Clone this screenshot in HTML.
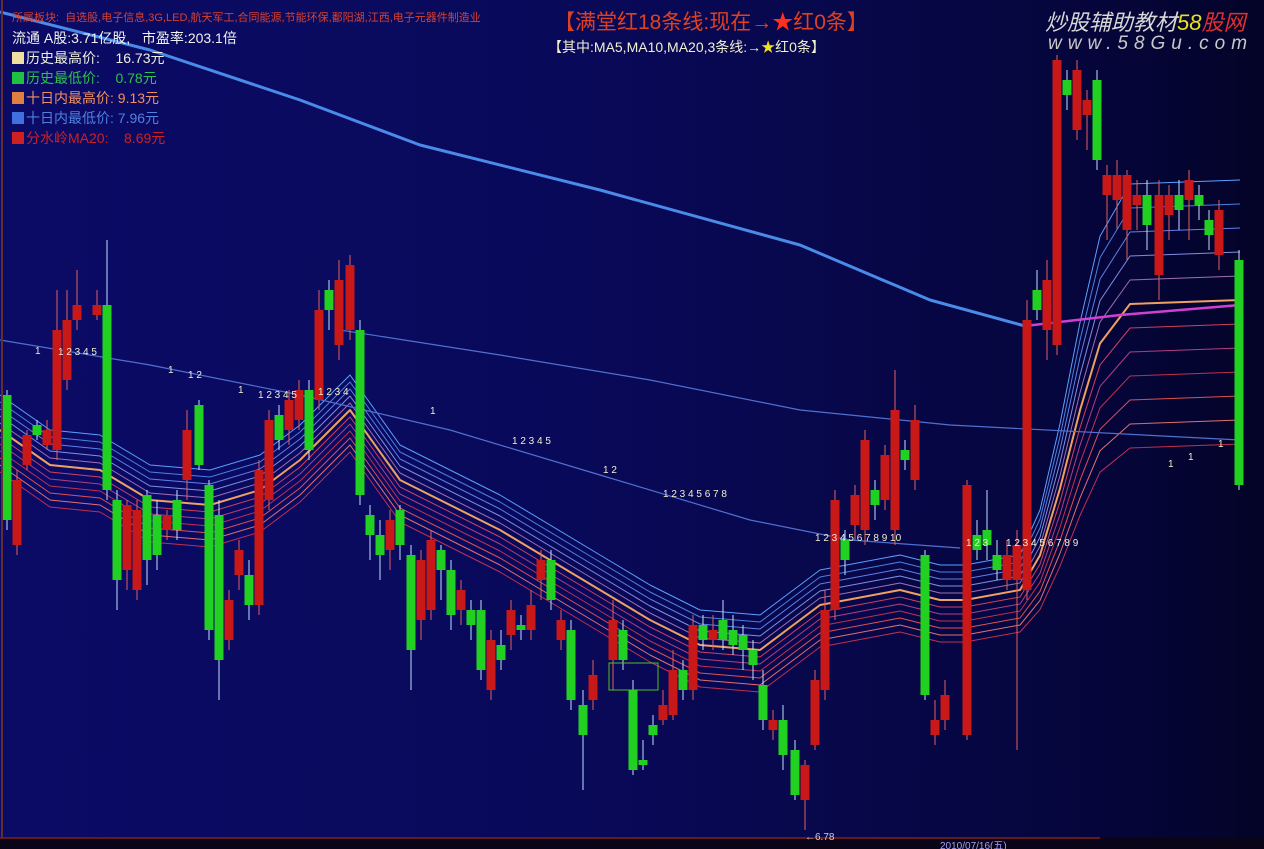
<!DOCTYPE html>
<html><head><meta charset="utf-8"><style>
html,body{margin:0;padding:0;}
body{width:1264px;height:849px;overflow:hidden;position:relative;background:linear-gradient(90deg,#0b0b66 0%,#09095a 45%,#070748 70%,#05053a 88%,#040428 100%);font-family:"Liberation Sans","Noto Sans CJK SC",sans-serif;}
svg{position:absolute;left:0;top:0}
.t{position:absolute;white-space:nowrap}
.sq{display:inline-block;width:12px;height:12px;margin-right:2px;vertical-align:-1px}
</style></head><body>
<svg id="s" width="1264" height="849"></svg>
<div class="t" style="left:12px;top:9px;font-size:11px;color:#d84030">所属板块:&nbsp; 自选股,电子信息,3G,LED,航天军工,合同能源,节能环保,鄱阳湖,江西,电子元器件制造业</div>
<div class="t" style="left:12px;top:28px;font-size:14px;color:#f0f0f0">流通 A股:3.71亿股,&nbsp;&nbsp; 市盈率:203.1倍</div>
<div class="t" style="left:12px;top:48px;font-size:14px;color:#f0f0e0"><span class="sq" style="background:#f0e0a0"></span>历史最高价:&nbsp;&nbsp;&nbsp; 16.73元</div>
<div class="t" style="left:12px;top:68px;font-size:14px;color:#30c050"><span class="sq" style="background:#20c040"></span>历史最低价:&nbsp;&nbsp;&nbsp; 0.78元</div>
<div class="t" style="left:12px;top:88px;font-size:14px;color:#f09060"><span class="sq" style="background:#e08040"></span>十日内最高价: 9.13元</div>
<div class="t" style="left:12px;top:108px;font-size:14px;color:#5080e0"><span class="sq" style="background:#4070e0"></span>十日内最低价: 7.96元</div>
<div class="t" style="left:12px;top:128px;font-size:14px;color:#d02020"><span class="sq" style="background:#d02020"></span>分水岭MA20:&nbsp;&nbsp;&nbsp; 8.69元</div>
<div class="t" style="left:554px;top:6px;font-size:21px;color:#e04020">【满堂红18条线:现在→<span style="color:#ff3020">★</span>红0条】</div>
<div class="t" style="left:548px;top:37px;font-size:14px;color:#f0f0d0">【其中:MA5,MA10,MA20,3条线:→<span style="color:#f0e020">★</span>红0条】</div>
<div class="t" style="left:1045px;top:5px;font-size:22px;font-style:italic;color:#d8d8d8">炒股辅助教材<span style="color:#e8e020">58</span><span style="color:#e03030">股网</span></div>
<div class="t" style="left:1048px;top:33px;font-size:19px;font-style:italic;color:#c8c8c8;letter-spacing:6px">www.58Gu.com</div>
<script>
var s=document.getElementById('s'),h='';
function L(pts,c,w){h+='<polyline fill="none" stroke="'+c+'" stroke-width="'+w+'" stroke-linejoin="round" points="'+pts.map(p=>p.join(',')).join(' ')+'"/>';}
// ribbon
var c=[[0,430],[50,465],[100,470],[150,500],[210,505],[260,490],[300,460],[350,410],[400,480],[500,530],[600,590],[650,620],[700,645],[760,650],[820,605],[900,590],[940,600],[965,600],[1020,590]];
var cols=['#5aa0ff','#4a80e0','#6080e8','#8090e0','#a070b0','#f0a060','#d04060','#b04080','#c03050','#e05050','#e07070','#c03050'];
for(var k=0;k<12;k++){var o=(k-5)*7;var p=c.map(q=>[q[0],q[1]+o]);
var e=180+k*24, y0=590+o;
p.push([1040,y0-(y0-e)*0.12],[1060,y0-(y0-e)*0.35],[1080,y0-(y0-e)*0.62],[1100,y0-(y0-e)*0.85],[1130,e+4],[1240,e]);
L(p,cols[k],k==5?2:1);}
// long MA
L([[0,12],[150,50],[300,100],[420,145],[600,190],[800,245],[930,300],[1025,326]],'#4a8ae8',3);
L([[1025,326],[1120,315],[1240,305]],'#d040d0',2.5);
L([[0,340],[150,365],[300,395],[450,430],[600,475],[750,520],[850,540],[960,548]],'#5070d0',1.2);
L([[340,330],[500,355],[650,380],[800,410],[950,425],[1240,440]],'#5070d0',1.2);
var C=[[7,395,520,'g',390,530],[17,480,545,'r',470,555],[27,435,465,'r',430,470],[37,425,435,'g',420,440],[47,430,445,'r',420,450],[57,330,450,'r',290,460],[67,320,380,'r',290,390],[77,305,320,'r',270,330],[97,305,315,'r',290,320],[107,305,490,'g',240,500],[117,500,580,'g',490,610],[127,505,570,'r',500,590],[137,510,590,'r',500,600],[147,495,560,'g',490,585],[157,515,555,'g',500,570],[167,515,530,'r',510,540],[177,500,530,'g',490,540],[187,430,480,'r',410,500],[199,405,465,'g',400,470],[209,485,630,'g',480,640],[219,515,660,'g',500,700],[229,600,640,'r',590,650],[239,550,575,'r',540,590],[249,575,605,'g',560,620],[259,470,605,'r',460,615],[269,420,500,'r',410,510],[279,415,440,'g',405,450],[289,400,430,'r',390,445],[299,390,420,'r',380,430],[309,390,450,'g',380,460],[319,310,400,'r',290,410],[329,290,310,'g',280,330],[339,280,345,'r',260,360],[350,265,330,'r',255,340],[360,330,495,'g',320,505],[370,515,535,'g',505,560],[380,535,555,'g',520,580],[390,520,550,'r',510,570],[400,510,545,'g',505,560],[411,555,650,'g',545,690],[421,560,620,'r',550,640],[431,540,610,'r',530,620],[441,550,570,'g',545,600],[451,570,615,'g',560,630],[461,590,610,'r',580,625],[471,610,625,'g',600,640],[481,610,670,'g',600,680],[491,640,690,'r',630,700],[501,645,660,'g',630,670],[511,610,635,'r',600,650],[521,625,630,'g',615,640],[531,605,630,'r',590,640],[541,560,580,'r',550,600],[551,560,600,'g',550,610],[561,620,640,'r',610,650],[571,630,700,'g',620,710],[583,705,735,'g',690,790],[593,675,700,'r',660,710],[613,620,660,'r',600,690],[623,630,660,'g',620,670],[633,690,770,'g',680,775],[643,760,765,'g',740,770],[653,725,735,'g',715,745],[663,705,720,'r',690,725],[673,670,715,'r',650,720],[683,670,690,'g',660,700],[693,625,690,'r',615,700],[703,625,640,'g',615,650],[713,630,640,'r',615,650],[723,620,640,'g',600,650],[733,630,645,'g',615,655],[743,635,650,'g',625,670],[753,650,665,'g',640,680],[763,685,720,'g',670,730],[773,720,730,'r',710,740],[783,720,755,'g',705,770],[795,750,795,'g',740,800],[805,765,800,'r',760,830],[815,680,745,'r',670,750],[825,610,690,'r',590,700],[835,500,610,'r',490,620],[845,540,560,'g',530,575],[855,495,525,'r',485,540],[865,440,530,'r',430,545],[875,490,505,'g',480,520],[885,455,500,'r',445,510],[895,410,530,'r',370,545],[905,450,460,'g',440,470],[915,420,480,'r',405,490],[925,555,695,'g',550,700],[935,720,735,'r',700,745],[945,695,720,'r',680,730],[967,485,735,'r',480,740],[977,535,550,'g',520,560],[987,530,545,'g',490,560],[997,555,570,'g',540,580],[1007,555,580,'r',540,590],[1017,545,580,'r',530,750],[1027,320,590,'r',300,600],[1037,290,310,'g',270,320],[1047,280,330,'r',260,360],[1057,60,345,'r',55,355],[1067,80,95,'g',70,110],[1077,70,130,'r',60,140],[1087,100,115,'r',90,150],[1097,80,160,'g',70,170],[1107,175,195,'r',165,240],[1117,175,200,'r',160,230],[1127,175,230,'r',170,260],[1137,195,205,'r',180,230],[1147,195,225,'g',180,250],[1159,195,275,'r',180,300],[1169,195,215,'r',185,240],[1179,195,210,'g',180,230],[1189,180,200,'r',170,240],[1199,195,205,'g',185,220],[1209,220,235,'g',210,250],[1219,210,255,'r',200,270],[1239,260,485,'g',250,490]];
C.forEach(function(d){var col=d[3]=='r'?'#c81818':'#22d022';var wc=d[3]=='r'?'#e06060':'#c0e0ff';
h+='<line x1="'+d[0]+'" y1="'+d[4]+'" x2="'+d[0]+'" y2="'+d[5]+'" stroke="'+wc+'" stroke-width="1"/>';
h+='<rect x="'+(d[0]-4.5)+'" y="'+d[1]+'" width="9" height="'+Math.max(2,d[2]-d[1])+'" fill="'+col+'"/>';});
var lab=[[35,354,'1'],[58,355,'1 2 3 4 5'],[168,373,'1'],[188,378,'1 2'],[238,393,'1'],[258,398,'1 2 3 4 5'],[318,395,'1 2 3 4'],[430,414,'1'],[512,444,'1 2 3 4 5'],[603,473,'1 2'],[663,497,'1 2 3 4 5 6 7 8'],[815,541,'1 2 3 4 5 6 7 8 9 10'],[966,546,'1 2 3'],[1006,546,'1 2 3 4 5 6 7 8 9'],[1168,467,'1'],[1188,460,'1'],[1218,447,'1']];
lab.forEach(function(l){h+='<text x="'+l[0]+'" y="'+l[1]+'" fill="#f0f0d0" font-size="10" font-family="Liberation Sans">'+l[2]+'</text>';});
h+='<rect x="609" y="663" width="49" height="27" fill="none" stroke="#50c020" stroke-width="1"/>';
h+='<rect x="0" y="838" width="1264" height="11" fill="#0a0418"/><line x1="0" y1="838" x2="1100" y2="838" stroke="#802020" stroke-width="1.5"/>';
h+='<line x1="2" y1="0" x2="2" y2="838" stroke="#603030" stroke-width="2"/>';
h+='<text x="805" y="840" fill="#d0d0d0" font-size="10" font-family="Liberation Sans">←6.78</text>';
h+='<text x="940" y="849" fill="#a0a0ff" font-size="10" font-family="Liberation Sans">2010/07/16(五)</text>';
s.innerHTML=h;
</script>
</body></html>
